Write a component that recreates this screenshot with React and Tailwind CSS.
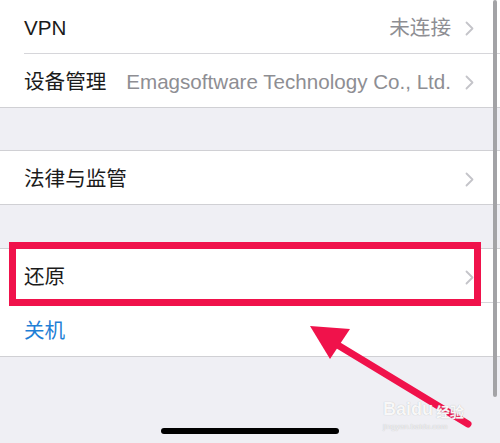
import React from 'react';

const Chevron = () => (
    <svg width="9" height="15" viewBox="0 0 9 15" className="shrink-0">
        <polyline points="1.5,1.5 7.5,7.5 1.5,13.5" fill="none" stroke="#c4c4c9" strokeWidth="1.8" strokeLinecap="round" strokeLinejoin="round" />
    </svg>
);

const Row = ({ label, value, blue, last, tall, chevron = true }) => (
    <div className={`${tall ? 'h-[54px]' : 'h-[53px]'} pl-6 flex`}>
        <div className={`flex-1 flex items-center pt-[3px] pr-[26px] ${last ? '' : 'border-b border-[#d6d6da]'}`}>
            <span className={`whitespace-nowrap ${blue ? 'text-[#1f7fd6]' : 'text-[#1b1b1b]'}`}>{label}</span>
            <span className="flex-1" />
            {value && <span className="text-[#8e8e93] whitespace-nowrap mr-[14px]">{value}</span>}
            {chevron && <Chevron />}
        </div>
    </div>
);

const Group = ({ children, top = true }) => (
    <div className={`bg-white border-b border-[#d0d0d4] ${top ? 'border-t' : ''}`}>{children}</div>
);

export default function App() {
    return (
        <div className="relative w-[500px] h-[443px] overflow-hidden bg-[#efeff4] text-[20.6px] font-['Liberation_Sans','Noto_Sans_CJK_SC',sans-serif]">
            <Group top={false}>
                <Row label="VPN" value="未连接" tall />
                <Row label="设备管理" value="Emagsoftware Technology Co., Ltd." last />
            </Group>
            <div className="h-[42px]" />
            <Group>
                <Row label="法律与监管" last />
            </Group>
            <div className="h-[43px]" />
            <Group>
                <Row label="还原" tall />
                <Row label="关机" blue last chevron={false} />
            </Group>

            {/* scroll indicator */}
            <div className="absolute right-[3px] top-0 w-[4px] h-[397px] rounded-full bg-[#a3a3a6]" />

            {/* red highlight box */}
            <div className="absolute left-[9px] top-[242px] w-[472px] h-[64px] border-[7px] border-[#f0124b]" />

            {/* red arrow */}
            <svg className="absolute left-0 top-0" width="500" height="443" viewBox="0 0 500 443">
                <line x1="336" y1="344" x2="468" y2="424" stroke="#f0124b" strokeWidth="7" strokeLinecap="round" />
                <polygon points="310,326 350,329 330,359" fill="#f0124b" />
            </svg>

            {/* watermark */}
            <div className="absolute left-[383px] top-[400px] flex flex-col items-start leading-none text-white/90 [text-shadow:0_0_1px_#b0b0b0]">
                <div className="flex items-end">
                    <span className="text-[18px] font-bold">Baidu</span>
                    <span className="text-[14px] font-bold ml-[3px] font-['Noto_Sans_CJK_SC',sans-serif]">经验</span>
                </div>
                <span className="text-[8px] mt-[5px] text-[#f4f4f6]">jingyan.baidu.com</span>
            </div>

            {/* home indicator */}
            <div className="absolute left-[161px] top-[428px] w-[178px] h-[6px] rounded-full bg-black" />
        </div>
    );
}
